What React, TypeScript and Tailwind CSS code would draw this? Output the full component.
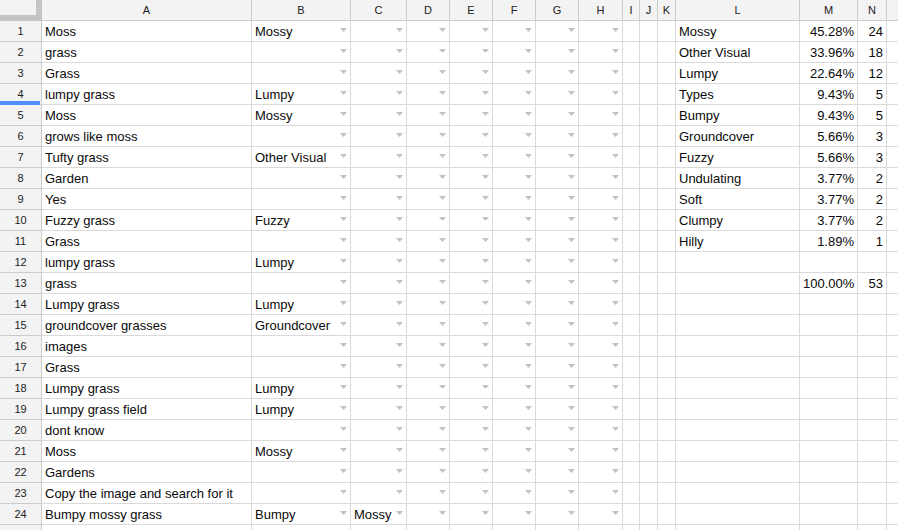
import React from "react";

const colW = [42, 210, 99, 56, 43, 43, 43, 43, 44, 17, 18, 18, 124, 58, 29, 40];
const letters = ["A", "B", "C", "D", "E", "F", "G", "H", "I", "J", "K", "L", "M", "N", ""];

const aCol = [
  "Moss", "grass", "Grass", "lumpy grass", "Moss", "grows like moss", "Tufty grass", "Garden", "Yes",
  "Fuzzy grass", "Grass", "lumpy grass", "grass", "Lumpy grass", "groundcover grasses", "images", "Grass",
  "Lumpy grass", "Lumpy grass field", "dont know", "Moss", "Gardens", "Copy the image and search for it",
  "Bumpy mossy grass", "",
];
const bCol = [
  "Mossy", "", "", "Lumpy", "Mossy", "", "Other Visual", "", "", "Fuzzy", "", "Lumpy", "", "Lumpy",
  "Groundcover", "", "", "Lumpy", "Lumpy", "", "Mossy", "", "", "Bumpy", "",
];
const lmn: [string, string, string][] = [
  ["Mossy", "45.28%", "24"],
  ["Other Visual", "33.96%", "18"],
  ["Lumpy", "22.64%", "12"],
  ["Types", "9.43%", "5"],
  ["Bumpy", "9.43%", "5"],
  ["Groundcover", "5.66%", "3"],
  ["Fuzzy", "5.66%", "3"],
  ["Undulating", "3.77%", "2"],
  ["Soft", "3.77%", "2"],
  ["Clumpy", "3.77%", "2"],
  ["Hilly", "1.89%", "1"],
  ["", "", ""],
  ["", "100.00%", "53"],
];

function Arrow() {
  return (
    <svg width="7" height="4" viewBox="0 0 7 4" className="absolute right-[3px] top-[7px]">
      <path d="M0 0H7L3.5 4Z" fill="#c2c2c2" />
    </svg>
  );
}

function Cell({
  w,
  text = "",
  right = false,
  arrow = false,
}: {
  w: number;
  text?: string;
  right?: boolean;
  arrow?: boolean;
}) {
  return (
    <div
      className={
        "relative shrink-0 h-[21px] border-r border-b border-[#dadada] bg-white overflow-hidden whitespace-nowrap text-[13px] leading-[22px] text-[#0a0a0a] px-[3px] " +
        (right ? "text-right" : "text-left")
      }
      style={{ width: w }}
    >
      {text}
      {arrow && <Arrow />}
    </div>
  );
}

export default function App() {
  const rows = Array.from({ length: 25 }, (_, i) => i);
  return (
    <div
      className="w-[898px] h-[530px] overflow-hidden bg-white"
      style={{ fontFamily: '"Liberation Sans", Arial, sans-serif' }}
    >
      <div className="flex w-[1000px]">
        <div className="shrink-0 w-[42px] h-[21px] bg-[#f3f3f3] border-r-[6px] border-b-[6px] border-[#c4c4c4]" />
        {letters.map((l, i) => (
          <div
            key={i}
            className="shrink-0 h-[21px] bg-[#f3f3f3] border-r border-b border-[#cccccc] text-center text-[11px] leading-[20px] text-[#222]"
            style={{ width: colW[i + 1] }}
          >
            {l}
          </div>
        ))}
      </div>
      {rows.map((r) => {
        const stats = lmn[r] || ["", "", ""];
        const hasArrow = r < 24;
        return (
          <div key={r} className="flex w-[1000px]">
            <div className="relative shrink-0 w-[42px] h-[21px] bg-[#f3f3f3] border-r border-b border-[#cccccc] text-center text-[11px] leading-[21px] text-[#222]">
              {r < 24 ? r + 1 : ""}
              {r === 3 && <div className="absolute left-0 right-[1px] bottom-[-1px] h-[4px] bg-[#4d90fe]" />}
            </div>
            <Cell w={colW[1]} text={aCol[r]} />
            <Cell w={colW[2]} text={bCol[r]} arrow={hasArrow} />
            <Cell w={colW[3]} text={r === 23 ? "Mossy" : ""} arrow={hasArrow} />
            <Cell w={colW[4]} arrow={hasArrow} />
            <Cell w={colW[5]} arrow={hasArrow} />
            <Cell w={colW[6]} arrow={hasArrow} />
            <Cell w={colW[7]} arrow={hasArrow} />
            <Cell w={colW[8]} arrow={hasArrow} />
            <Cell w={colW[9]} />
            <Cell w={colW[10]} />
            <Cell w={colW[11]} />
            <Cell w={colW[12]} text={stats[0]} />
            <Cell w={colW[13]} text={stats[1]} right />
            <Cell w={colW[14]} text={stats[2]} right />
            <Cell w={colW[15]} />
          </div>
        );
      })}
    </div>
  );
}
